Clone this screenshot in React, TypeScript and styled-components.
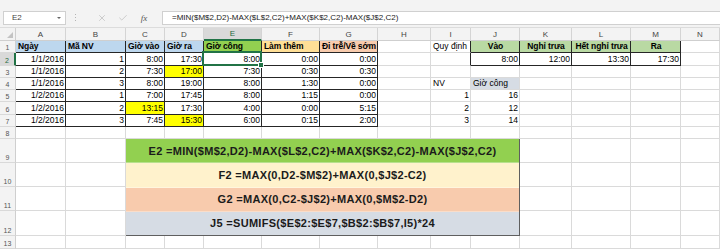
import React from "react";
import styled, { createGlobalStyle } from "styled-components";
import { X, Check } from "lucide-react";

const GlobalStyle = createGlobalStyle`
  html, body { margin: 0; padding: 0; background: #fff; overflow: hidden; }
  body { font-family: "Liberation Sans", Arial, sans-serif; color: #000; }
`;

type Align = "l" | "r" | "c";

interface CellDef {
  v?: string;
  a?: Align;
  b?: boolean;
  bg?: string;
  bd?: boolean;
  br?: boolean;
  sel?: boolean;
}

const BLUE = "#bdd7ee";
const GREEN = "#92d050";
const AMBER = "#ffdf96";
const SALMON = "#f8cbad";
const MINT = "#b9d9a3";
const YELLOW = "#ffff00";
const SLATE = "#d6dce4";

const COLS = ["A", "B", "C", "D", "E", "F", "G", "H", "I", "J", "K", "L", "M", "N"];

const head = (v: string, bg: string, a: Align = "l"): CellDef => ({ v, a, b: true, bg, bd: true });
const val = (v: string, bg?: string): CellDef => ({ v, a: "r", bd: true, bg });
const txt = (v: string, a: Align = "l", bg?: string): CellDef => ({ v, a, bg });
const empty: CellDef = {};

const dataRow = (
  date: string,
  nv: string,
  inT: CellDef,
  outT: CellDef,
  work: string,
  extra: string,
  late: string,
  rest: CellDef[]
): CellDef[] => [
  val(date),
  val(nv),
  inT,
  outT,
  val(work),
  val(extra),
  val(late),
  ...rest,
];

const blanks = (n: number) => Array.from({ length: n }, () => empty);

const topRows: CellDef[][] = [
  [
    head("Ngày", BLUE),
    head("Mã NV", BLUE),
    head("Giờ vào", BLUE),
    head("Giờ ra", BLUE),
    head("Giờ công", GREEN),
    head("Làm thêm", AMBER),
    head("Đi trễ/Về sớm", SALMON),
    empty,
    { v: "Quy định", a: "l", br: true },
    head("Vào", MINT, "c"),
    head("Nghỉ trưa", MINT, "c"),
    head("Hết nghỉ trưa", MINT, "c"),
    head("Ra", MINT, "c"),
    empty,
  ],
  [
    val("1/1/2016"),
    val("1"),
    val("8:00"),
    val("17:30"),
    { ...val("8:00"), sel: true },
    val("0:00"),
    val("0:00"),
    empty,
    { br: true },
    val("8:00"),
    val("12:00"),
    val("13:30"),
    val("17:30"),
    empty,
  ],
  dataRow("1/1/2016", "2", val("7:30"), val("17:00", YELLOW), "7:30", "0:30", "0:30", blanks(7)),
  dataRow("1/1/2016", "3", val("8:00"), val("19:00"), "8:00", "1:30", "0:00", [
    empty,
    txt("NV"),
    txt("Giờ công", "l", SLATE),
    ...blanks(4),
  ]),
  dataRow("1/2/2016", "1", val("7:00"), val("17:45"), "8:00", "1:15", "0:00", [
    empty,
    txt("1", "r"),
    txt("16", "r"),
    ...blanks(4),
  ]),
  dataRow("1/2/2016", "2", val("13:15", YELLOW), val("17:30"), "4:00", "0:00", "5:15", [
    empty,
    txt("2", "r"),
    txt("12", "r"),
    ...blanks(4),
  ]),
  dataRow("1/2/2016", "3", val("7:45"), val("15:30", YELLOW), "6:00", "0:15", "2:00", [
    empty,
    txt("3", "r"),
    txt("14", "r"),
    ...blanks(4),
  ]),
  blanks(14),
];

const formulas = [
  { text: "E2 =MIN($M$2,D2)-MAX($L$2,C2)+MAX($K$2,C2)-MAX($J$2,C2)", bg: GREEN },
  { text: "F2 =MAX(0,D2-$M$2)+MAX(0,$J$2-C2)", bg: "#fff2cc" },
  { text: "G2 =MAX(0,C2-$J$2)+MAX(0,$M$2-D2)", bg: SALMON },
  { text: "J5 =SUMIFS($E$2:$E$7,$B$2:$B$7,I5)*24", bg: SLATE },
];

const justify = (a?: Align) => (a === "r" ? "flex-end" : a === "c" ? "center" : "flex-start");

export default function App() {
  return (
    <>
      <GlobalStyle />
      <Window>
        <FormulaBar>
          <NameBox>
            E2
            <Caret />
          </NameBox>
          <Grip>
            <i />
            <i />
            <i />
          </Grip>
          <BarButton>
            <X size={10} strokeWidth={1.5} />
          </BarButton>
          <BarButton>
            <Check size={10} strokeWidth={1.5} />
          </BarButton>
          <FxLabel>fx</FxLabel>
          <FormulaInput>=MIN($M$2,D2)-MAX($L$2,C2)+MAX($K$2,C2)-MAX($J$2,C2)</FormulaInput>
        </FormulaBar>

        <Sheet>
          <Corner>
            <CornerMark />
          </Corner>
          {COLS.map((c) => (
            <ColHeader key={c} $active={c === "E"}>
              {c}
            </ColHeader>
          ))}

          {topRows.map((row, r) => (
            <React.Fragment key={r}>
              <RowHeader $active={r === 1}>{r + 1}</RowHeader>
              {row.map((cell, i) => (
                <Cell
                  key={i}
                  $align={cell.a}
                  $bold={cell.b}
                  $bg={cell.bg}
                  $dark={cell.bd}
                  $darkRight={cell.br}
                  $selected={cell.sel}
                >
                  {cell.v}
                </Cell>
              ))}
            </React.Fragment>
          ))}

          <FormulaBox>
            {formulas.map((f) => (
              <FormulaRow key={f.text} $bg={f.bg}>
                {f.text}
              </FormulaRow>
            ))}
          </FormulaBox>

          {[9, 10, 11, 12].map((n) => (
            <React.Fragment key={n}>
              <RowHeader>{n}</RowHeader>
              <Cell />
              <Cell />
              <Cell />
              <Cell />
              <Cell />
              <Cell />
            </React.Fragment>
          ))}

          <RowHeader>13</RowHeader>
          {COLS.map((c) => (
            <Cell key={c} />
          ))}
        </Sheet>
      </Window>
    </>
  );
}

const Window = styled.div`
  width: 720px;
  height: 249px;
  overflow: hidden;
  background: #fff;
`;

const FormulaBar = styled.div`
  display: flex;
  align-items: center;
  height: 28px;
  box-sizing: border-box;
  padding: 11px 0 3px 3px;
  background: #f3f3f3;
  border-bottom: 1px solid #dcdcdc;
`;

const NameBox = styled.div`
  position: relative;
  display: flex;
  align-items: center;
  width: 63px;
  height: 14px;
  box-sizing: border-box;
  padding-left: 8px;
  background: #fff;
  border: 1px solid #d0d0d0;
  font-size: 8px;
  color: #444;
`;

const Caret = styled.span`
  position: absolute;
  right: 4px;
  top: 5px;
  border-left: 2px solid transparent;
  border-right: 2px solid transparent;
  border-top: 2px solid #666;
`;

const Grip = styled.div`
  display: flex;
  flex-direction: column;
  gap: 2px;
  margin: 0 15px 0 9px;

  i {
    display: block;
    width: 1px;
    height: 1px;
    background: #b4b4b4;
  }
`;

const BarButton = styled.div`
  display: flex;
  align-items: center;
  justify-content: center;
  width: 21px;
  color: #b3b3b3;
`;

const FxLabel = styled.div`
  width: 22px;
  text-align: center;
  font-family: "Liberation Serif", serif;
  font-style: italic;
  font-size: 9px;
  color: #555;
  margin-right: 7px;
`;

const FormulaInput = styled.div`
  flex: 1;
  display: flex;
  align-items: center;
  height: 14px;
  box-sizing: border-box;
  padding-left: 9px;
  background: #fff;
  border: 1px solid #d0d0d0;
  border-right: none;
  font-size: 8px;
  color: #222;
  white-space: nowrap;
`;

const Sheet = styled.div`
  display: grid;
  grid-template-columns: 16px 50px 60px 39px 39px 58px 58px 58px 53px 40px 49px 52px 59px 50px 1fr;
  grid-template-rows: 13px repeat(8, 12.25px) 24px 24px 24px 25px 13px;
`;

const Corner = styled.div`
  position: relative;
  background: #f3f3f3;
  border-right: 1px solid #cfcfcf;
  border-bottom: 1px solid #cfcfcf;
`;

const CornerMark = styled.span`
  position: absolute;
  right: 2px;
  bottom: 2px;
  border-left: 6px solid transparent;
  border-bottom: 6px solid #c3c3c3;
`;

const ColHeader = styled.div<{ $active?: boolean }>`
  display: flex;
  align-items: center;
  justify-content: center;
  box-sizing: border-box;
  font-size: 8px;
  color: ${(p) => (p.$active ? "#1e6b3f" : "#444")};
  background: ${(p) => (p.$active ? "#d9d9d9" : "#f3f3f3")};
  border-right: 1px solid #d4d4d4;
  border-bottom: ${(p) => (p.$active ? "2px solid #217346" : "1px solid #cfcfcf")};
`;

const RowHeader = styled.div<{ $active?: boolean }>`
  display: flex;
  align-items: flex-end;
  justify-content: center;
  box-sizing: border-box;
  padding-bottom: 1px;
  font-size: 7px;
  color: ${(p) => (p.$active ? "#1e6b3f" : "#555")};
  background: ${(p) => (p.$active ? "#d9d9d9" : "#f3f3f3")};
  border-right: ${(p) => (p.$active ? "2px solid #217346" : "1px solid #cfcfcf")};
  border-bottom: 1px solid #d9d9d9;
`;

const Cell = styled.div<{
  $align?: Align;
  $bold?: boolean;
  $bg?: string;
  $dark?: boolean;
  $darkRight?: boolean;
  $selected?: boolean;
}>`
  position: relative;
  display: flex;
  align-items: flex-end;
  justify-content: ${(p) => justify(p.$align)};
  box-sizing: border-box;
  padding: 0 1px 0 2px;
  overflow: hidden;
  white-space: nowrap;
  font-size: 8.5px;
  line-height: 11px;
  font-weight: ${(p) => (p.$bold ? 700 : 400)};
  letter-spacing: ${(p) => (p.$bold ? "-0.1px" : "0")};
  background: ${(p) => p.$bg || "#fff"};
  border-right: 1px solid ${(p) => (p.$dark || p.$darkRight ? "#262626" : "#dadada")};
  border-bottom: 1px solid ${(p) => (p.$dark ? "#262626" : "#dadada")};

  ${(p) =>
    p.$selected &&
    `
    overflow: visible;
    &::after {
      content: "";
      position: absolute;
      inset: -2px -1px -1px -2px;
      border: 2px solid #217346;
    }
    &::before {
      content: "";
      position: absolute;
      right: -3px;
      bottom: -3px;
      width: 4px;
      height: 4px;
      background: #217346;
      border: 1px solid #fff;
      z-index: 2;
    }
  `}
`;

const FormulaBox = styled.div`
  grid-column: 4 / 12;
  grid-row: 10 / 14;
  display: flex;
  flex-direction: column;
  box-sizing: border-box;
  border: 1px solid #5f5f5f;
  margin-left: -1px;
  margin-top: -1px;
`;

const FormulaRow = styled.div<{ $bg: string }>`
  flex: 1;
  display: flex;
  align-items: center;
  justify-content: center;
  background: ${(p) => p.$bg};
  border-bottom: 1px solid rgba(255, 255, 255, 0.35);
  font-size: 11px;
  font-weight: 700;
  letter-spacing: 0.3px;
  color: #1b1b1b;
  white-space: nowrap;

  &:last-child {
    border-bottom: none;
  }
`;
